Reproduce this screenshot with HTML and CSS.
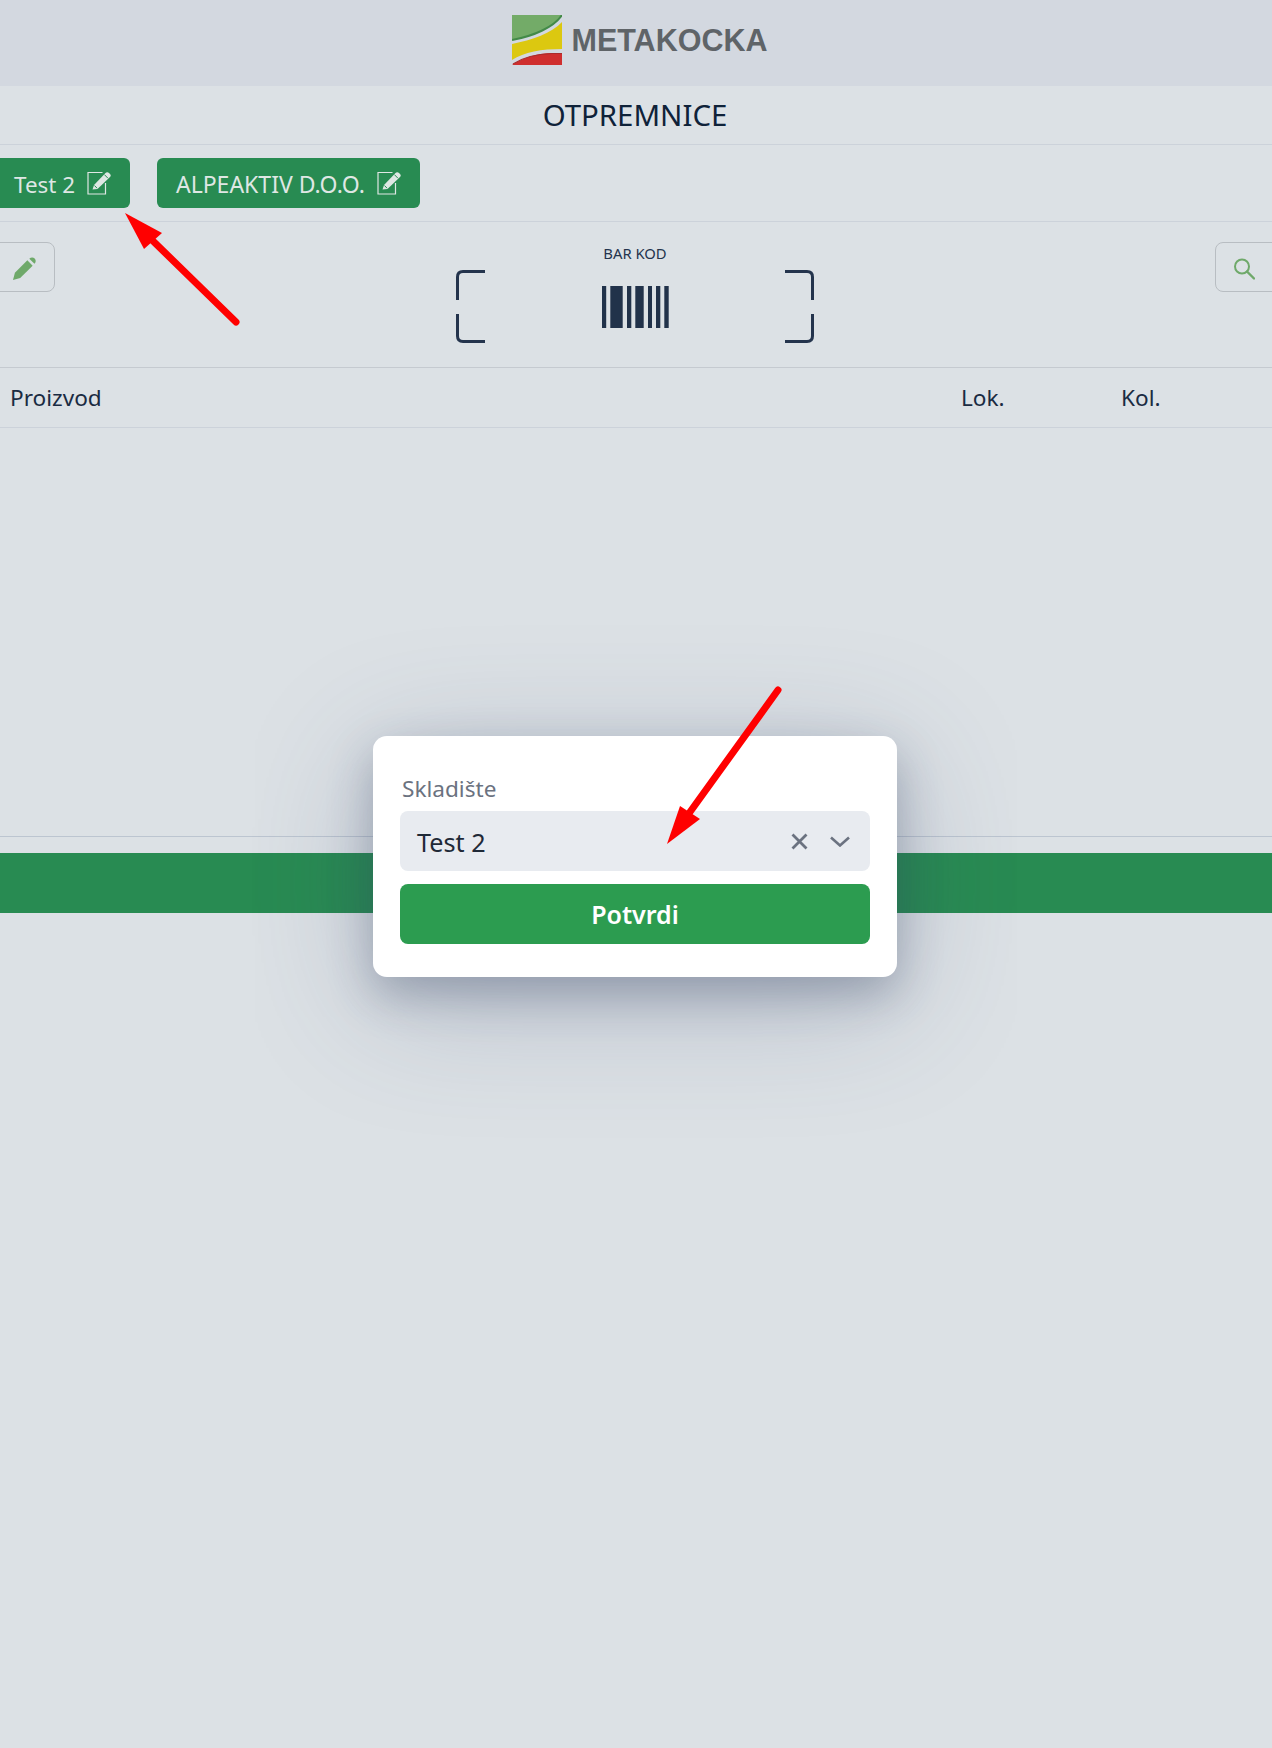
FILE: index.html
```html
<!DOCTYPE html>
<html lang="hr">
<head>
  <meta charset="UTF-8">
  <meta name="viewport" content="width=device-width, initial-scale=1">
  <title>Otpremnice</title>
  <link rel="stylesheet" href="styles.css">
</head>
<body>

  <header class="top-bar">
    <svg class="logo-mark" viewBox="0 0 50 50" width="50" height="50">
      <path d="M0 0H50C42 12 22 21 0 25Z" fill="#73ab68"/>
      <path d="M0 25C22 21 42 12 50 0" fill="none" stroke="#438a48" stroke-width="2"/>
      <path d="M0 29C20 25 40 18 50 7V34C30 34 12 37 0 45Z" fill="#dcc810"/>
      <path d="M0 50C10 43 25 38 40 38H50V50Z" fill="#cf2e2e"/>
      <path d="M1 49C10 43 25 39 40 38.5H50" fill="none" stroke="#a92b2b" stroke-width="1.2"/>
    </svg>
    <span class="logo-text">METAKOCKA</span>
  </header>

  <h1 class="page-title">OTPREMNICE</h1>

  <div class="chips">
    <button class="chip chip-first">
      <span class="chip-text">Test 2</span>
      <svg class="note-icon" viewBox="0 0 24 24" width="24" height="24">
        <path d="M15.5 1.5H1V23H18.5V12" fill="none" stroke="currentColor" stroke-width="1.2"/>
        <path d="M5.5 18.5L7 14L18.5 2C19.5 1 21 1 22 2L23 3C24 4 24 5 23 6L10.5 18Z" fill="currentColor"/>
        <path d="M7.5 14.5L10 17.2M17.4 3.6L20.9 7.2" stroke="#288b52" stroke-width="1"/>
      </svg>
    </button>
    <button class="chip">
      <span class="chip-text">ALPEAKTIV D.O.O.</span>
      <svg class="note-icon" viewBox="0 0 24 24" width="24" height="24">
        <path d="M15.5 1.5H1V23H18.5V12" fill="none" stroke="currentColor" stroke-width="1.2"/>
        <path d="M5.5 18.5L7 14L18.5 2C19.5 1 21 1 22 2L23 3C24 4 24 5 23 6L10.5 18Z" fill="currentColor"/>
        <path d="M7.5 14.5L10 17.2M17.4 3.6L20.9 7.2" stroke="#288b52" stroke-width="1"/>
      </svg>
    </button>
  </div>

  <section class="scan-row">
    <button class="tool-btn tool-left">
      <svg viewBox="0 0 24 24" width="23" height="23">
        <path d="M0 24L2 16.5L15 3.5L20.5 9L7.5 22Z" fill="#6fa96a"/>
        <path d="M17 1.8C18.5 .2 21 0 22.6 1.5C24.2 3.2 24 5.5 22.4 7Z" fill="#6fa96a"/>
      </svg>
    </button>
    <div class="scanner">
      <div class="scanner-label">BAR KOD</div>
      <svg viewBox="0 0 358 73" width="358" height="73">
        <path d="M29 1.5H7Q1.5 1.5 1.5 7V30M1.5 44V66Q1.5 71.5 7 71.5H29M329 1.5H351Q356.5 1.5 356.5 7V30M356.5 44V66Q356.5 71.5 351 71.5H329" fill="none" stroke="#24344d" stroke-width="3"/>
        <g fill="#21324a">
          <rect x="146" y="16" width="4.2" height="42"/>
          <rect x="154.3" y="16" width="12.4" height="42"/>
          <rect x="171" y="16" width="4.3" height="42"/>
          <rect x="179.3" y="16" width="8.4" height="42"/>
          <rect x="192" y="16" width="4" height="42"/>
          <rect x="200" y="16" width="4.3" height="42"/>
          <rect x="208.3" y="16" width="4.4" height="42"/>
        </g>
      </svg>
    </div>
    <button class="tool-btn tool-right">
      <svg viewBox="0 0 22 22" width="22" height="22">
        <circle cx="9" cy="8.5" r="7" fill="none" stroke="#6fa96a" stroke-width="2"/>
        <path d="M14 13.5L21 20.5" stroke="#6fa96a" stroke-width="2.4" stroke-linecap="round"/>
      </svg>
    </button>
  </section>

  <div class="table-head">
    <span class="col-name">Proizvod</span>
    <span class="col-loc">Lok.</span>
    <span class="col-qty">Kol.</span>
  </div>

  <div class="table-body"></div>

  <div class="bottom-bar"></div>

  <div class="modal">
    <label class="field-label">Skladište</label>
    <div class="select-box">
      <span class="select-value">Test 2</span>
      <svg class="select-clear" viewBox="0 0 17 17" width="17" height="17">
        <path d="M1.5 1.5L15.5 15.5M15.5 1.5L1.5 15.5" stroke="#6b7280" stroke-width="2.8"/>
      </svg>
      <svg class="select-arrow" viewBox="0 0 20 11" width="20" height="11">
        <path d="M1 1.5L10 9.5L19 1.5" fill="none" stroke="#6b7280" stroke-width="2.6"/>
      </svg>
    </div>
    <button class="confirm-btn">Potvrdi</button>
  </div>

  <!-- crvene strelice preko ekrana -->
  <svg class="arrows" viewBox="0 0 1272 1748" width="1272" height="1748">
    <path d="M236 322L153 241" stroke="#ff0000" stroke-width="7" stroke-linecap="round"/>
    <path d="M125 213L162 233L144 249Z" fill="#ff0000"/>
    <path d="M778 690L690 812" stroke="#ff0000" stroke-width="7" stroke-linecap="round"/>
    <path d="M667 844L680 806L700 819Z" fill="#ff0000"/>
  </svg>

</body>
</html>
```

FILE: styles.css
```css
* {
  box-sizing: border-box;
}

html, body {
  margin: 0;
  padding: 0;
}

body {
  position: relative;
  width: 1272px;
  height: 1748px;
  overflow: hidden;
  font-family: 'Noto Sans', sans-serif;
  background-color: #dce1e5;
  color: #1a2b42;
}

button {
  font-family: inherit;
  cursor: pointer;
}

.top-bar {
  height: 86px;
  display: flex;
  justify-content: center;
  align-items: center;
  gap: 10px;
  padding: 0 0 6px 7px;
  background-color: #d3d8e0;
}

.logo-mark {
  display: block;
}

.logo-text {
  font-family: 'Liberation Sans', sans-serif;
  font-weight: bold;
  font-size: 30.5px;
  color: #5f6468;
}

.page-title {
  margin: 0;
  height: 59px;
  line-height: 58px;
  padding-right: 2px;
  text-align: center;
  font-size: 29.4px;
  font-weight: 400;
  color: #0f2239;
  border-bottom: 1px solid #ccd2da;
}

.chips {
  height: 77px;
  display: flex;
  align-items: center;
  gap: 27px;
  border-bottom: 1px solid #ccd2da;
}

.chip {
  height: 50px;
  display: flex;
  align-items: center;
  gap: 12px;
  padding: 0 19px;
  border: none;
  border-radius: 6px;
  background-color: #288b52;
  color: #dfe7e4;
  font-size: 23px;
}

.chip-first {
  margin-left: -5px;
  font-size: 22.4px;
}

.chip-text {
  padding-top: 2px;
}

.note-icon {
  display: block;
}

.scan-row {
  height: 146px;
  display: flex;
  justify-content: space-between;
  align-items: flex-start;
  border-bottom: 1px solid #c5cad0;
  padding-top: 20px;
}

.tool-btn {
  width: 66px;
  height: 50px;
  display: flex;
  align-items: center;
  justify-content: center;
  background: transparent;
  border: 1px solid #b8bdc2;
  border-radius: 8px;
  padding: 3px 0 0;
}

.tool-left {
  margin-left: -11px;
  padding-left: 4px;
}

.tool-right {
  margin-right: -9px;
  justify-content: flex-start;
  padding-left: 17px;
}

.scanner {
  display: flex;
  flex-direction: column;
  align-items: center;
}

.scanner-label {
  font-size: 14.8px;
  line-height: 23px;
  margin-bottom: 5px;
  color: #24344d;
}

.table-head {
  height: 60px;
  display: flex;
  align-items: center;
  font-size: 22.6px;
  color: #1a2b42;
  border-bottom: 1px solid #ccd2da;
}

.col-name {
  width: 961px;
  padding-left: 10px;
}

.col-loc {
  width: 160px;
}

.table-body {
  height: 409px;
  border-bottom: 1px solid #bcc5d0;
}

.bottom-bar {
  height: 60px;
  margin-top: 16px;
  background-color: #288b52;
}

.modal {
  position: absolute;
  left: 373px;
  top: 736px;
  width: 524px;
  height: 241px;
  padding: 36px 27px 0;
  background-color: #fff;
  border-radius: 14px;
  box-shadow: 0 18px 45px rgba(40, 55, 85, 0.3), 0 25px 130px rgba(60, 75, 115, 0.26);
}

.field-label {
  display: block;
  height: 39px;
  line-height: 34px;
  padding-left: 2px;
  font-size: 22.6px;
  color: #6b7280;
}

.select-box {
  height: 60px;
  display: flex;
  align-items: center;
  padding: 0 20px 0 17px;
  border-radius: 8px;
  background-color: #e8ebf0;
}

.select-value {
  flex: 1;
  padding-top: 1px;
  font-size: 25.2px;
  color: #1f2937;
}

.select-clear {
  margin-right: 22px;
}

.confirm-btn {
  display: block;
  width: 100%;
  height: 60px;
  margin-top: 13px;
  border: none;
  border-radius: 8px;
  background-color: #2c9c50;
  color: #fff;
  font-size: 25px;
  font-weight: 600;
}

.arrows {
  position: absolute;
  left: 0;
  top: 0;
  pointer-events: none;
}
```
